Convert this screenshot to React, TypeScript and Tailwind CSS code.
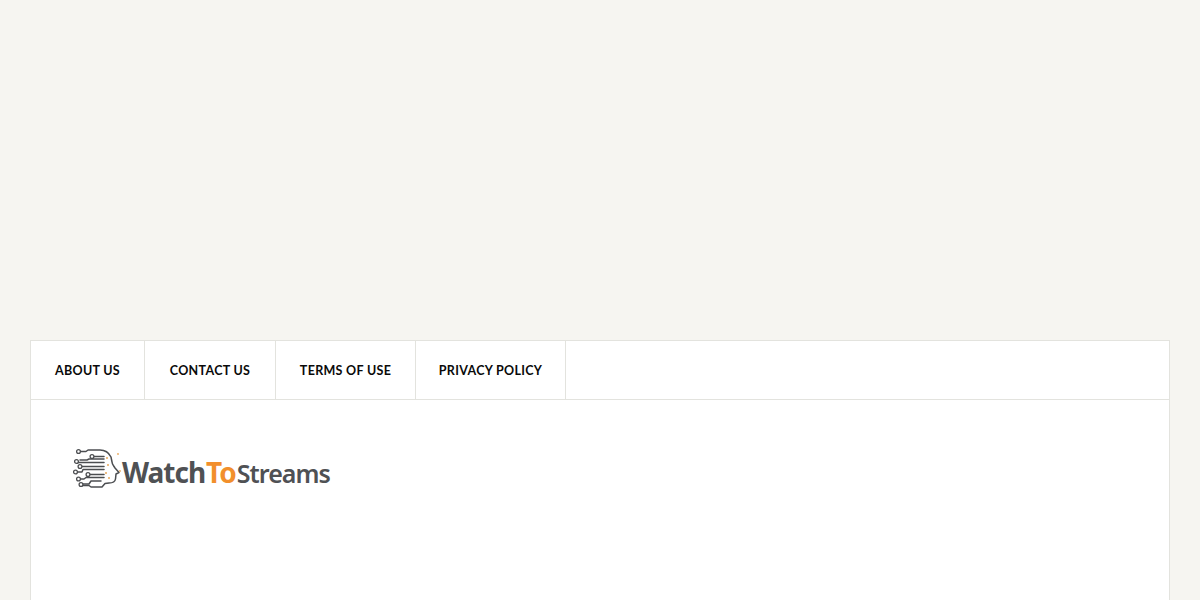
import React from 'react';

const navLinks = [
  { label: 'ABOUT US', width: 'w-[114px]' },
  { label: 'CONTACT US', width: 'w-[131px]' },
  { label: 'TERMS OF USE', width: 'w-[140px]' },
  { label: 'PRIVACY POLICY', width: 'w-[150px]' },
];

// Brain/circuit mark in front of the wordmark
const LogoMark = () => (
  <svg width="50" height="42" viewBox="0 0 50 42" fill="none" className="shrink-0">
    <g stroke="#4c4e51" strokeWidth="1.5" strokeLinecap="round" strokeLinejoin="round">
      <path d="M7 3.500H13L15 2H27C33 2 36 5 38 9L39 14C39 16 40 17 42 20L46 24.500L43 26L42.500 31C42 34 40 35 36 35L32 35.500L29 39H18L16 37.500H9" />
      <path d="M21 8.500H31" />
      <path d="M7 12H14L16 11H31" />
      <path d="M4 14.500H31" />
      <path d="M8 18.500H31" />
      <path d="M4 24H9L10 21.500H31" />
      <path d="M17 26.500H31" />
      <path d="M7 31H11L13 29.500H31" />
      <path d="M10 36H16L18 33H28" />
    </g>
    <g fill="#ffffff" stroke="#4c4e51" strokeWidth="1.300">
      <circle cx="5.500" cy="3.500" r="1.900" />
      <circle cx="19" cy="8.500" r="1.900" />
      <circle cx="3.500" cy="13.500" r="1.900" />
      <circle cx="7" cy="18.500" r="1.900" />
      <circle cx="2.500" cy="24" r="1.900" />
      <circle cx="15" cy="26.500" r="1.900" />
      <circle cx="5.500" cy="31" r="1.900" />
      <circle cx="8" cy="36.500" r="1.900" />
    </g>
    <g fill="#e9a95c">
      <circle cx="34" cy="10" r="1" />
      <circle cx="35" cy="17" r="1" />
      <circle cx="33" cy="25" r="1" />
      <circle cx="36" cy="30" r="1" />
      <circle cx="45" cy="6" r="0.900" />
      <circle cx="47" cy="23" r="0.900" />
    </g>
  </svg>
);

export default function App() {
  return (
    <div className="h-[600px] overflow-hidden bg-[#f6f5f1] px-[30px] pt-[340px] font-['Lato',sans-serif]">
      <div className="h-[300px] border border-[#e3e3de] bg-white">
        <nav className="flex h-[58px]">
          {navLinks.map((link) => (
            <a
              key={link.label}
              href="#"
              className={`flex items-center justify-center border-r border-[#e3e3de] pt-[2px] text-[12.5px] font-bold tracking-[0.3px] text-[#0a0a0a] ${link.width}`}
            >
              {link.label}
            </a>
          ))}
        </nav>
        <div className="border-t border-[#e3e3de] pl-[42px] pt-[44px]">
          <div className="flex items-center">
            <LogoMark />
            <div className="-ml-[1px] mt-[7px] flex items-baseline font-['Noto_Sans',sans-serif] text-[28px] leading-[42px] font-bold tracking-[-1px] text-[#4f5154]">
              Watch
              <span className="ml-[1px] mr-[1px] text-[#f28f2c]">To</span>
              <span className="text-[25px] font-semibold tracking-[-0.95px]">Streams</span>
            </div>
          </div>
        </div>
      </div>
    </div>
  );
}
